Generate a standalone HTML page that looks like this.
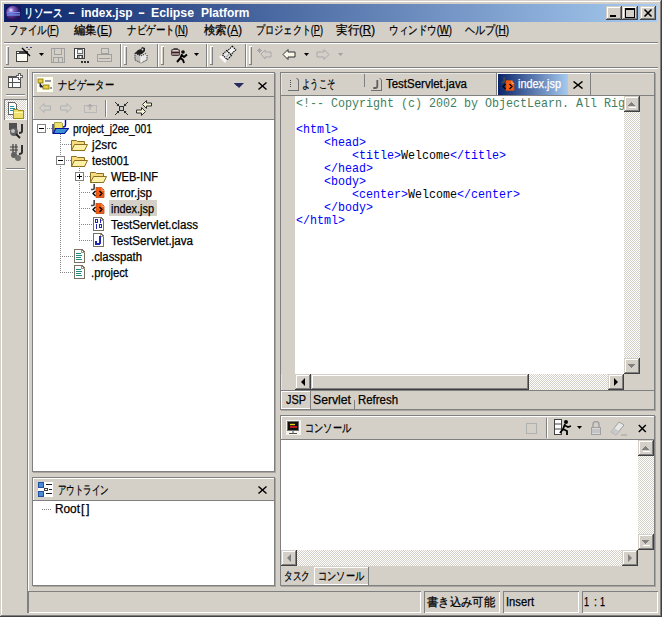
<!DOCTYPE html><html><head><meta charset="utf-8"><style>
*{margin:0;padding:0;box-sizing:border-box}
html,body{width:662px;height:617px;overflow:hidden;background:#D4D0C8}
body{position:relative;font-family:'Liberation Sans',sans-serif}
div{position:absolute}
.t{white-space:pre;transform-origin:0 0}
.t span{display:inline}
u{text-decoration:underline;text-decoration-thickness:1px;text-underline-offset:1px}
.dith{background:repeating-conic-gradient(#FFFFFF 0 25%,#D4D0C8 0 50%) 0 0/2px 2px}
</style></head><body><div style="left:0px;top:0px;width:662px;height:617px;background:#D4D0C8;"></div><div style="left:1px;top:1px;width:660px;height:1px;background:#FFFFFF;"></div><div style="left:1px;top:1px;width:1px;height:615px;background:#FFFFFF;"></div><div style="left:660px;top:1px;width:1px;height:615px;background:#808080;"></div><div style="left:1px;top:615px;width:660px;height:1px;background:#808080;"></div><div style="left:661px;top:0px;width:1px;height:617px;background:#404040;"></div><div style="left:0px;top:616px;width:662px;height:1px;background:#404040;"></div><div style="left:4px;top:4px;width:653px;height:18px;background:linear-gradient(to right,#0A246A,#A6CAF0);"></div><svg style="position:absolute;left:5px;top:5px;shape-rendering:auto" width="16" height="16" viewBox="0 0 16 16" shape-rendering="crispEdges"><defs><radialGradient id="eg" cx="0.35" cy="0.3" r="0.8"><stop offset="0" stop-color="#F0E8FF"/><stop offset="0.25" stop-color="#8060C0"/><stop offset="0.7" stop-color="#3A1E70"/><stop offset="1" stop-color="#1A0E40"/></radialGradient></defs><rect x="0" y="0" width="16" height="16" fill="#1A1860"/><circle cx="8" cy="8" r="7" fill="url(#eg)"/><rect x="2" y="7" width="13" height="1.3" fill="#7090F0"/><rect x="2" y="9.3" width="13" height="1.3" fill="#7090F0"/></svg><div class="t" id="t0" style="left:23.5px;top:6.84px;font-size:12px;line-height:12px;color:#fff;font-weight:700;font-family:'Liberation Sans',sans-serif;transform:scaleX(0.8021);"><span>リソース</span></div><div class="t" id="t1" style="left:67.5px;top:6.84px;font-size:12px;line-height:12px;color:#fff;font-weight:700;font-family:'Liberation Sans',sans-serif;transform:scaleX(1.7500);"><span>-</span></div><div class="t" id="t2" style="left:80.5px;top:6.84px;font-size:12px;line-height:12px;color:#fff;font-weight:700;font-family:'Liberation Sans',sans-serif;transform:scaleX(0.9901);"><span>index.jsp</span></div><div class="t" id="t3" style="left:138px;top:6.84px;font-size:12px;line-height:12px;color:#fff;font-weight:700;font-family:'Liberation Sans',sans-serif;transform:scaleX(1.7500);"><span>-</span></div><div class="t" id="t4" style="left:150.5px;top:6.84px;font-size:12px;line-height:12px;color:#fff;font-weight:700;font-family:'Liberation Sans',sans-serif;transform:scaleX(1.0230);"><span>Eclipse</span></div><div class="t" id="t5" style="left:200.5px;top:6.84px;font-size:12px;line-height:12px;color:#fff;font-weight:700;font-family:'Liberation Sans',sans-serif;transform:scaleX(0.9961);"><span>Platform</span></div><div style="left:606px;top:6px;width:16px;height:14px;background:#D4D0C8;box-shadow:inset -1px -1px #404040,inset 1px 1px #D4D0C8,inset -2px -2px #808080,inset 2px 2px #FFFFFF;"></div><div style="left:622px;top:6px;width:16px;height:14px;background:#D4D0C8;box-shadow:inset -1px -1px #404040,inset 1px 1px #D4D0C8,inset -2px -2px #808080,inset 2px 2px #FFFFFF;"></div><div style="left:640px;top:6px;width:16px;height:14px;background:#D4D0C8;box-shadow:inset -1px -1px #404040,inset 1px 1px #D4D0C8,inset -2px -2px #808080,inset 2px 2px #FFFFFF;"></div><svg style="position:absolute;left:606px;top:6px;" width="16" height="14" viewBox="0 0 16 14" shape-rendering="crispEdges"><rect x="4" y="9" width="6" height="2" fill="#000"/></svg><svg style="position:absolute;left:622px;top:6px;" width="16" height="14" viewBox="0 0 16 14" shape-rendering="crispEdges"><rect x="3" y="2" width="9" height="9" fill="none" stroke="#000" stroke-width="1"/><rect x="3" y="2" width="9" height="2" fill="#000"/></svg><svg style="position:absolute;left:640px;top:6px;shape-rendering:auto" width="16" height="14" viewBox="0 0 16 14" shape-rendering="crispEdges"><path d="M4.5 3.5 L11.5 10.5 M11.5 3.5 L4.5 10.5" stroke="#000" stroke-width="1.6" fill="none"/></svg><div class="t" id="t6" style="left:9px;top:24.34px;font-size:12px;line-height:12px;color:#000;font-weight:400;font-family:'Liberation Sans',sans-serif;-webkit-text-stroke:0.25px #000;transform:scaleX(0.7893);"><span>ファイル(<u>F</u>)</span></div><div class="t" id="t7" style="left:74px;top:24.34px;font-size:12px;line-height:12px;color:#000;font-weight:400;font-family:'Liberation Sans',sans-serif;-webkit-text-stroke:0.25px #000;transform:scaleX(0.9496);"><span>編集(<u>E</u>)</span></div><div class="t" id="t8" style="left:127px;top:24.34px;font-size:12px;line-height:12px;color:#000;font-weight:400;font-family:'Liberation Sans',sans-serif;-webkit-text-stroke:0.25px #000;transform:scaleX(0.7956);"><span>ナビゲート(<u>N</u>)</span></div><div class="t" id="t9" style="left:204px;top:24.34px;font-size:12px;line-height:12px;color:#000;font-weight:400;font-family:'Liberation Sans',sans-serif;-webkit-text-stroke:0.25px #000;transform:scaleX(0.9496);"><span>検索(<u>A</u>)</span></div><div class="t" id="t10" style="left:256px;top:24.34px;font-size:12px;line-height:12px;color:#000;font-weight:400;font-family:'Liberation Sans',sans-serif;-webkit-text-stroke:0.25px #000;transform:scaleX(0.7612);"><span>プロジェクト(<u>P</u>)</span></div><div class="t" id="t11" style="left:336px;top:24.34px;font-size:12px;line-height:12px;color:#000;font-weight:400;font-family:'Liberation Sans',sans-serif;-webkit-text-stroke:0.25px #000;transform:scaleX(0.9589);"><span>実行(<u>R</u>)</span></div><div class="t" id="t12" style="left:389px;top:24.34px;font-size:12px;line-height:12px;color:#000;font-weight:400;font-family:'Liberation Sans',sans-serif;-webkit-text-stroke:0.25px #000;transform:scaleX(0.7942);"><span>ウィンドウ(<u>W</u>)</span></div><div class="t" id="t13" style="left:465px;top:24.34px;font-size:12px;line-height:12px;color:#000;font-weight:400;font-family:'Liberation Sans',sans-serif;-webkit-text-stroke:0.25px #000;transform:scaleX(0.8354);"><span>ヘルプ(<u>H</u>)</span></div><div style="left:4px;top:42px;width:654px;height:1px;background:#808080;"></div><div style="left:4px;top:43px;width:654px;height:1px;background:#FFFFFF;"></div><div style="left:4px;top:67px;width:654px;height:1px;background:#808080;"></div><div style="left:4px;top:68px;width:654px;height:1px;background:#FFFFFF;"></div><div style="left:120px;top:44px;width:1px;height:23px;background:#808080;"></div><div style="left:121px;top:44px;width:1px;height:23px;background:#FFFFFF;"></div><div style="left:157px;top:44px;width:1px;height:23px;background:#808080;"></div><div style="left:158px;top:44px;width:1px;height:23px;background:#FFFFFF;"></div><div style="left:206px;top:44px;width:1px;height:23px;background:#808080;"></div><div style="left:207px;top:44px;width:1px;height:23px;background:#FFFFFF;"></div><div style="left:245px;top:44px;width:1px;height:23px;background:#808080;"></div><div style="left:246px;top:44px;width:1px;height:23px;background:#FFFFFF;"></div><div style="left:6px;top:46px;width:1px;height:19px;background:#FFFFFF;"></div><div style="left:8px;top:46px;width:1px;height:19px;background:#808080;"></div><div style="left:6px;top:46px;width:3px;height:1px;background:#FFFFFF;"></div><div style="left:6px;top:64px;width:3px;height:1px;background:#808080;"></div><div style="left:8px;top:46px;width:1px;height:1px;background:#FFFFFF;"></div><div style="left:124px;top:46px;width:1px;height:19px;background:#FFFFFF;"></div><div style="left:126px;top:46px;width:1px;height:19px;background:#808080;"></div><div style="left:124px;top:46px;width:3px;height:1px;background:#FFFFFF;"></div><div style="left:124px;top:64px;width:3px;height:1px;background:#808080;"></div><div style="left:126px;top:46px;width:1px;height:1px;background:#FFFFFF;"></div><div style="left:161px;top:46px;width:1px;height:19px;background:#FFFFFF;"></div><div style="left:163px;top:46px;width:1px;height:19px;background:#808080;"></div><div style="left:161px;top:46px;width:3px;height:1px;background:#FFFFFF;"></div><div style="left:161px;top:64px;width:3px;height:1px;background:#808080;"></div><div style="left:163px;top:46px;width:1px;height:1px;background:#FFFFFF;"></div><div style="left:210px;top:46px;width:1px;height:19px;background:#FFFFFF;"></div><div style="left:212px;top:46px;width:1px;height:19px;background:#808080;"></div><div style="left:210px;top:46px;width:3px;height:1px;background:#FFFFFF;"></div><div style="left:210px;top:64px;width:3px;height:1px;background:#808080;"></div><div style="left:212px;top:46px;width:1px;height:1px;background:#FFFFFF;"></div><div style="left:249px;top:46px;width:1px;height:19px;background:#FFFFFF;"></div><div style="left:251px;top:46px;width:1px;height:19px;background:#808080;"></div><div style="left:249px;top:46px;width:3px;height:1px;background:#FFFFFF;"></div><div style="left:249px;top:64px;width:3px;height:1px;background:#808080;"></div><div style="left:251px;top:46px;width:1px;height:1px;background:#FFFFFF;"></div><svg style="position:absolute;left:15px;top:46px;" width="18" height="17" viewBox="0 0 18 17" shape-rendering="crispEdges"><rect x="1" y="5" width="12" height="11" fill="#404040"/><rect x="2" y="8" width="10" height="7" fill="#FAFAF0"/><rect x="2" y="6" width="2" height="1" fill="#fff"/><path d="M7 2 L15 10" stroke="#000" stroke-width="1.5" shape-rendering="auto"/><rect x="11" y="1" width="2" height="1" fill="#404080"/><rect x="15" y="1" width="2" height="1" fill="#404080"/><rect x="13" y="3" width="2" height="1" fill="#808040"/></svg><svg style="position:absolute;left:39px;top:53px;shape-rendering:auto" width="5" height="3" viewBox="0 0 5 3" shape-rendering="crispEdges"><path d="M0 0H5L2.5 3Z" fill="#000"/></svg><svg style="position:absolute;left:51px;top:48px;" width="14" height="15" viewBox="0 0 14 15" shape-rendering="crispEdges"><rect x="0.5" y="0.5" width="13" height="14" fill="none" stroke="#A0A0A0"/><rect x="3.5" y="0.5" width="7" height="6" fill="none" stroke="#A0A0A0"/><rect x="2.5" y="9.5" width="9" height="5" fill="none" stroke="#A0A0A0"/><path d="M7 10v4" stroke="#A0A0A0"/></svg><svg style="position:absolute;left:74px;top:48px;" width="16" height="16" viewBox="0 0 16 16" shape-rendering="crispEdges"><rect x="0.5" y="0.5" width="10" height="10" fill="#D8D8D8" stroke="#404040"/><rect x="1" y="1" width="2" height="9" fill="#fff"/><rect x="3.5" y="1" width="5" height="4" fill="#F4F4F4" stroke="#707070"/><rect x="3.5" y="7" width="5" height="3.5" fill="#A0A0A0" stroke="#404040"/><rect x="6" y="8" width="1" height="2" fill="#fff"/><rect x="9" y="1" width="1" height="1" fill="#fff"/><rect x="7" y="13" width="2" height="2" fill="#303030"/><rect x="10" y="13" width="2" height="2" fill="#303030"/><rect x="13" y="13" width="2" height="2" fill="#303030"/></svg><svg style="position:absolute;left:97px;top:48px;" width="16" height="15" viewBox="0 0 16 15" shape-rendering="crispEdges"><rect x="4.5" y="0.5" width="7" height="5" fill="none" stroke="#A0A0A0"/><rect x="0.5" y="6.5" width="14" height="7" fill="none" stroke="#A0A0A0"/><path d="M2 10h11" stroke="#A0A0A0"/></svg><svg style="position:absolute;left:133px;top:46px;shape-rendering:auto" width="17" height="18" viewBox="0 0 17 18" shape-rendering="crispEdges"><path d="M2 7 L8 10 L8 17 L2 14Z" fill="#C0C0C0"/><path d="M8 10 L14 7 L14 14 L8 17Z" fill="#E8E8E8"/><path d="M2 7 L8 10 L14 7" fill="none" stroke="#202020" stroke-dasharray="1.2 1"/><path d="M2 7 L2 14 L8 17 L14 14 L14 8" fill="none" stroke="#202020" stroke-dasharray="1.2 1"/><path d="M2 7 L5 4 L8 3 L9 1 L12 2 L12 5 L9 8 L6 9Z" fill="#202020"/><circle cx="9.5" cy="3.5" r="1" fill="#E0E0E0"/><path d="M8 10v7" stroke="#F8F8F8"/></svg><svg style="position:absolute;left:170px;top:46px;shape-rendering:auto" width="20" height="18" viewBox="0 0 20 18" shape-rendering="crispEdges"><path d="M3.5 2.5h4v1.5" fill="none" stroke="#505050"/><rect x="1.5" y="3.5" width="8" height="6" rx="1" fill="#9A8080" stroke="#404040"/><path d="M2 6.5h7" stroke="#302020"/><path d="M3 4.5h5" stroke="#E0D0D0"/><circle cx="13" cy="6" r="1.8" fill="#000"/><path d="M12 8 L10.5 12 L7 16 M10.5 12 L13 14 L14 17 M11.5 9 L14 11 L17 8.5" stroke="#000" stroke-width="1.9" fill="none" stroke-linejoin="round"/></svg><svg style="position:absolute;left:194px;top:53px;shape-rendering:auto" width="5" height="3" viewBox="0 0 5 3" shape-rendering="crispEdges"><path d="M0 0H5L2.5 3Z" fill="#000"/></svg><svg style="position:absolute;left:218px;top:44px;shape-rendering:auto" width="20" height="20" viewBox="0 0 20 20" shape-rendering="crispEdges"><g transform="rotate(45 10 10)"><path d="M6.5 15h7l1 3.5h-9z" fill="#FFFFFF" opacity=".8"/><rect x="7.5" y="1.5" width="5" height="7" fill="#F4F4F4" stroke="#000" stroke-dasharray="1.5 .8"/><rect x="6.5" y="8.5" width="7" height="6" fill="#E4E4E4" stroke="#000" stroke-dasharray="1.5 .8"/><path d="M11 9.5v4" stroke="#A0A0A0"/></g></svg><svg style="position:absolute;left:257px;top:48px;shape-rendering:auto" width="17" height="13" viewBox="0 0 17 13" shape-rendering="crispEdges"><path d="M1 1l3 3M4 1l-3 3M2.5 0v5M0 2.5h5" stroke="#A8A8A8"/><path d="M4 6 L8 2 L8 4 L14 4 L14 9 L8 9 L8 11Z" fill="none" stroke="#A8A8A8"/></svg><svg style="position:absolute;left:282px;top:49px;shape-rendering:auto" width="14" height="11" viewBox="0 0 14 11" shape-rendering="crispEdges"><path d="M1 5.5 L6 0.5 L6 3 L13 3 L13 8 L6 8 L6 10.5Z" fill="#F8F8E8" stroke="#303030"/></svg><svg style="position:absolute;left:304px;top:53px;shape-rendering:auto" width="5" height="3" viewBox="0 0 5 3" shape-rendering="crispEdges"><path d="M0 0H5L2.5 3Z" fill="#000"/></svg><svg style="position:absolute;left:316px;top:49px;shape-rendering:auto" width="14" height="11" viewBox="0 0 14 11" shape-rendering="crispEdges"><path d="M13 5.5 L8 0.5 L8 3 L1 3 L1 8 L8 8 L8 10.5Z" fill="none" stroke="#A8A8A8"/></svg><svg style="position:absolute;left:338px;top:53px;shape-rendering:auto" width="5" height="3" viewBox="0 0 5 3" shape-rendering="crispEdges"><path d="M0 0H5L2.5 3Z" fill="#A0A0A0"/></svg><div style="left:27px;top:69px;width:1px;height:544px;background:#808080;"></div><div style="left:28px;top:69px;width:1px;height:544px;background:#FFFFFF;"></div><svg style="position:absolute;left:7px;top:73px;" width="18" height="16" viewBox="0 0 18 16" shape-rendering="crispEdges"><rect x="1.5" y="3.5" width="12" height="11" fill="#F8F8F8" stroke="#505050"/><rect x="1" y="3" width="9" height="2" fill="#505050"/><path d="M1 9.5h12M5.5 4v10" stroke="#505050"/><path d="M11.5 0.5h2v2h2v2h-2v2h-2v-2h-2v-2h2z" fill="#fff" stroke="#606060" transform="translate(0,0)"/></svg><div style="left:6px;top:94px;width:19px;height:1px;background:#808080;"></div><div style="left:6px;top:95px;width:19px;height:1px;background:#FFFFFF;"></div><div style="left:4px;top:99px;width:23px;height:21px;background:#D4D0C8;box-shadow:inset 1px 1px #808080,inset -1px -1px #FFFFFF"></div><div style="left:5px;top:100px;width:21px;height:19px;background:;background:repeating-conic-gradient(#FFFFFF 0 25%,#D4D0C8 0 50%) 0 0/2px 2px"></div><svg style="position:absolute;left:8px;top:102px;" width="17" height="17" viewBox="0 0 17 17" shape-rendering="crispEdges"><path d="M0.5 0.5h6l2 2v10h-8z" fill="#fff" stroke="#606060"/><path d="M2 4h4M2 6h5M2 8h4" stroke="#2090A0"/><path d="M5.5 7.5h4l1 1h5v8h-10z" fill="#F0E070" stroke="#A09010"/><path d="M6 10h9" stroke="#FFF8B0"/></svg><svg style="position:absolute;left:8px;top:123px;shape-rendering:auto" width="17" height="18" viewBox="0 0 17 18" shape-rendering="crispEdges"><rect x="1" y="0" width="8" height="7" fill="#505050"/><circle cx="6" cy="9" r="4" fill="#606060"/><circle cx="5" cy="8" r="2" fill="#fff" opacity=".6"/><path d="M8 11 L12 15" stroke="#202020" stroke-width="2"/><path d="M14 1v7q0 2-3 2" stroke="#303030" stroke-width="2" fill="none"/></svg><svg style="position:absolute;left:8px;top:144px;shape-rendering:auto" width="17" height="18" viewBox="0 0 17 18" shape-rendering="crispEdges"><path d="M2 3h8M2 6h8M5 0v9M8 0v9" stroke="#404040" stroke-width="1.2"/><circle cx="6" cy="11" r="3" fill="#606060"/><circle cx="10" cy="14" r="3" fill="#707070"/><path d="M14 1v7q0 2-3 2" stroke="#303030" stroke-width="2" fill="none"/></svg><div style="left:6px;top:168px;width:19px;height:1px;background:#808080;"></div><div style="left:6px;top:169px;width:19px;height:1px;background:#FFFFFF;"></div><div style="left:28px;top:591px;width:393px;height:22px;background:#D4D0C8;box-shadow:inset 1px 1px #808080,inset -1px -1px #FFFFFF;"></div><div style="left:424px;top:591px;width:76px;height:22px;background:#D4D0C8;box-shadow:inset 1px 1px #808080,inset -1px -1px #FFFFFF;"></div><div style="left:503px;top:591px;width:76px;height:22px;background:#D4D0C8;box-shadow:inset 1px 1px #808080,inset -1px -1px #FFFFFF;"></div><div style="left:582px;top:591px;width:76px;height:22px;background:#D4D0C8;box-shadow:inset 1px 1px #808080,inset -1px -1px #FFFFFF;"></div><div class="t" id="t14" style="left:427px;top:595.84px;font-size:12px;line-height:12px;color:#000;font-weight:400;font-family:'Liberation Sans',sans-serif;-webkit-text-stroke:0.25px #000;transform:scaleX(0.9444);"><span>書き込み可能</span></div><div class="t" id="t15" style="left:506px;top:595.84px;font-size:12px;line-height:12px;color:#000;font-weight:400;font-family:'Liberation Sans',sans-serif;-webkit-text-stroke:0.25px #000;transform:scaleX(0.9328);"><span>Insert</span></div><div class="t" id="t16" style="left:584px;top:595.84px;font-size:12px;line-height:12px;color:#000;font-weight:400;font-family:'Liberation Sans',sans-serif;-webkit-text-stroke:0.25px #000;transform:scaleX(0.7477);"><span>1</span></div><div class="t" id="t17" style="left:594px;top:595.84px;font-size:12px;line-height:12px;color:#000;font-weight:400;font-family:'Liberation Sans',sans-serif;-webkit-text-stroke:0.25px #000;transform:scaleX(0.8972);"><span>:</span></div><div class="t" id="t18" style="left:600px;top:595.84px;font-size:12px;line-height:12px;color:#000;font-weight:400;font-family:'Liberation Sans',sans-serif;-webkit-text-stroke:0.25px #000;transform:scaleX(0.7477);"><span>1</span></div><div style="left:32px;top:72px;width:243px;height:400px;background:#D4D0C8;"></div><div style="left:32px;top:72px;width:243px;height:1px;background:#808080;"></div><div style="left:32px;top:471px;width:243px;height:1px;background:#808080;"></div><div style="left:32px;top:72px;width:1px;height:400px;background:#808080;"></div><div style="left:274px;top:72px;width:1px;height:400px;background:#808080;"></div><div style="left:33px;top:73px;width:241px;height:1px;background:#FFFFFF;"></div><div style="left:33px;top:73px;width:1px;height:398px;background:#FFFFFF;"></div><div style="left:275px;top:73px;width:1px;height:400px;background:#A8A6A0;"></div><div style="left:33px;top:472px;width:243px;height:1px;background:#A8A6A0;"></div><div style="left:33px;top:96px;width:241px;height:1px;background:#808080;"></div><div style="left:33px;top:119px;width:241px;height:1px;background:#808080;"></div><div style="left:33px;top:120px;width:241px;height:351px;background:#fff;"></div><svg style="position:absolute;left:37px;top:77px;shape-rendering:auto" width="17" height="16" viewBox="0 0 17 16" shape-rendering="crispEdges"><rect x="0" y="0" width="16" height="15" fill="#FFFFF0"/><rect x="1" y="2" width="5" height="4" fill="#E8D040" stroke="#807000" stroke-width=".8"/><rect x="6" y="8" width="6" height="4" fill="#E8D040" stroke="#807000" stroke-width=".8"/><path d="M3 6v4h3M8 4h6M13 11h2" stroke="#303050"/></svg><div class="t" id="t19" style="left:58px;top:78.84px;font-size:12px;line-height:12px;color:#000;font-weight:400;font-family:'Liberation Sans',sans-serif;-webkit-text-stroke:0.25px #000;transform:scaleX(0.7778);"><span>ナビゲーター</span></div><svg style="position:absolute;left:234px;top:83px;shape-rendering:auto" width="5" height="3" viewBox="0 0 5 3" shape-rendering="crispEdges"><path d="M0 0H5L2.5 3Z" fill="#303070"/></svg><svg style="position:absolute;left:234px;top:83px;shape-rendering:auto" width="10" height="5" viewBox="0 0 10 5" shape-rendering="crispEdges"><path d="M0 0H10L5 5Z" fill="#2A2A60"/></svg><svg style="position:absolute;left:258px;top:82px;shape-rendering:auto" width="9" height="8" viewBox="0 0 9 8" shape-rendering="crispEdges"><path d="M0.5 0.5L8.5 7.5M8.5 0.5L0.5 7.5" stroke="#000" stroke-width="1.4"/></svg><svg style="position:absolute;left:39px;top:103px;shape-rendering:auto" width="12" height="10" viewBox="0 0 12 10" shape-rendering="crispEdges"><path d="M0.5 5 L5 0.5 L5 3 L11.5 3 L11.5 7 L5 7 L5 9.5Z" fill="none" stroke="#B0B0B0"/></svg><svg style="position:absolute;left:60px;top:103px;shape-rendering:auto" width="12" height="10" viewBox="0 0 12 10" shape-rendering="crispEdges"><path d="M11.5 5 L7 0.5 L7 3 L0.5 3 L0.5 7 L7 7 L7 9.5Z" fill="none" stroke="#B0B0B0"/></svg><svg style="position:absolute;left:84px;top:103px;shape-rendering:auto" width="13" height="10" viewBox="0 0 13 10" shape-rendering="crispEdges"><rect x="0.5" y="2.5" width="12" height="7" fill="none" stroke="#B8B8B8"/><path d="M6 1v6M3.5 4L6 1.5L8.5 4" stroke="#A0A0A0" fill="none"/></svg><div style="left:105px;top:100px;width:1px;height:17px;background:#808080;"></div><div style="left:106px;top:100px;width:1px;height:17px;background:#FFFFFF;"></div><svg style="position:absolute;left:114px;top:101px;shape-rendering:auto" width="15" height="15" viewBox="0 0 15 15" shape-rendering="crispEdges"><rect x="5.5" y="5.5" width="4" height="4" fill="#C8C8C8" stroke="#303030"/><path d="M1 1L4.5 4.5M14 1L10.5 4.5M1 14L4.5 10.5M14 14L10.5 10.5" stroke="#303030"/><path d="M5 5H2.5L5 2.5ZM10 5H12.5L10 2.5ZM5 10H2.5L5 12.5ZM10 10H12.5L10 12.5Z" fill="#202020"/></svg><svg style="position:absolute;left:135px;top:99px;shape-rendering:auto" width="18" height="18" viewBox="0 0 18 18" shape-rendering="crispEdges"><path d="M7.5 5.5 L11.5 1.5 L11.5 4 L16.5 4 L16.5 7 L11.5 7 L11.5 9.5Z" fill="#F4F4D8" stroke="#303030"/><path d="M10.5 12.5 L6.5 8.5 L6.5 11 L1.5 11 L1.5 14 L6.5 14 L6.5 16.5Z" fill="#F4F4D8" stroke="#303030"/></svg><svg style="position:absolute;left:37px;top:124px;shape-rendering:auto" width="9" height="9" viewBox="0 0 9 9" shape-rendering="crispEdges"><rect x="0.5" y="0.5" width="8" height="8" fill="#fff" stroke="#808080"/><path d="M2 4.5h5" stroke="#000"/></svg><div style="left:47px;top:128px;width:1px;height:1px;background:#848484;"></div><div style="left:49px;top:128px;width:1px;height:1px;background:#848484;"></div><div style="left:51px;top:128px;width:1px;height:1px;background:#848484;"></div><svg style="position:absolute;left:52px;top:119px;shape-rendering:auto" width="17" height="16" viewBox="0 0 17 16" shape-rendering="crispEdges"><path d="M2.5 3.5h7l1 1v6h-8z" fill="#F0E070" stroke="#909020" stroke-width=".8"/><path d="M1 5 L1 14 L3 14" stroke="#202060" stroke-width="1.4" fill="none"/><path d="M3.5 9.5h13l-4 5h-11z" fill="#3A90D0" stroke="#0010A0" stroke-width="1.2"/><path d="M13.5 1v5q0 2-2.5 2" stroke="#0000E0" stroke-width="1.4" fill="none"/></svg><div class="t" id="t20" style="left:73px;top:122.54px;font-size:12px;line-height:12px;color:#000;font-weight:400;font-family:'Liberation Sans',sans-serif;-webkit-text-stroke:0.25px #000;transform:scaleX(0.8580);"><span>project_j2ee_001</span></div><div style="left:60px;top:134px;width:1px;height:1px;background:#848484;"></div><div style="left:60px;top:136px;width:1px;height:1px;background:#848484;"></div><div style="left:60px;top:138px;width:1px;height:1px;background:#848484;"></div><div style="left:60px;top:140px;width:1px;height:1px;background:#848484;"></div><div style="left:60px;top:142px;width:1px;height:1px;background:#848484;"></div><div style="left:60px;top:144px;width:1px;height:1px;background:#848484;"></div><div style="left:60px;top:146px;width:1px;height:1px;background:#848484;"></div><div style="left:60px;top:148px;width:1px;height:1px;background:#848484;"></div><div style="left:60px;top:150px;width:1px;height:1px;background:#848484;"></div><div style="left:60px;top:152px;width:1px;height:1px;background:#848484;"></div><div style="left:60px;top:154px;width:1px;height:1px;background:#848484;"></div><div style="left:60px;top:156px;width:1px;height:1px;background:#848484;"></div><div style="left:60px;top:158px;width:1px;height:1px;background:#848484;"></div><div style="left:60px;top:160px;width:1px;height:1px;background:#848484;"></div><div style="left:60px;top:162px;width:1px;height:1px;background:#848484;"></div><div style="left:60px;top:164px;width:1px;height:1px;background:#848484;"></div><div style="left:60px;top:166px;width:1px;height:1px;background:#848484;"></div><div style="left:60px;top:168px;width:1px;height:1px;background:#848484;"></div><div style="left:60px;top:170px;width:1px;height:1px;background:#848484;"></div><div style="left:60px;top:172px;width:1px;height:1px;background:#848484;"></div><div style="left:60px;top:174px;width:1px;height:1px;background:#848484;"></div><div style="left:60px;top:176px;width:1px;height:1px;background:#848484;"></div><div style="left:60px;top:178px;width:1px;height:1px;background:#848484;"></div><div style="left:60px;top:180px;width:1px;height:1px;background:#848484;"></div><div style="left:60px;top:182px;width:1px;height:1px;background:#848484;"></div><div style="left:60px;top:184px;width:1px;height:1px;background:#848484;"></div><div style="left:60px;top:186px;width:1px;height:1px;background:#848484;"></div><div style="left:60px;top:188px;width:1px;height:1px;background:#848484;"></div><div style="left:60px;top:190px;width:1px;height:1px;background:#848484;"></div><div style="left:60px;top:192px;width:1px;height:1px;background:#848484;"></div><div style="left:60px;top:194px;width:1px;height:1px;background:#848484;"></div><div style="left:60px;top:196px;width:1px;height:1px;background:#848484;"></div><div style="left:60px;top:198px;width:1px;height:1px;background:#848484;"></div><div style="left:60px;top:200px;width:1px;height:1px;background:#848484;"></div><div style="left:60px;top:202px;width:1px;height:1px;background:#848484;"></div><div style="left:60px;top:204px;width:1px;height:1px;background:#848484;"></div><div style="left:60px;top:206px;width:1px;height:1px;background:#848484;"></div><div style="left:60px;top:208px;width:1px;height:1px;background:#848484;"></div><div style="left:60px;top:210px;width:1px;height:1px;background:#848484;"></div><div style="left:60px;top:212px;width:1px;height:1px;background:#848484;"></div><div style="left:60px;top:214px;width:1px;height:1px;background:#848484;"></div><div style="left:60px;top:216px;width:1px;height:1px;background:#848484;"></div><div style="left:60px;top:218px;width:1px;height:1px;background:#848484;"></div><div style="left:60px;top:220px;width:1px;height:1px;background:#848484;"></div><div style="left:60px;top:222px;width:1px;height:1px;background:#848484;"></div><div style="left:60px;top:224px;width:1px;height:1px;background:#848484;"></div><div style="left:60px;top:226px;width:1px;height:1px;background:#848484;"></div><div style="left:60px;top:228px;width:1px;height:1px;background:#848484;"></div><div style="left:60px;top:230px;width:1px;height:1px;background:#848484;"></div><div style="left:60px;top:232px;width:1px;height:1px;background:#848484;"></div><div style="left:60px;top:234px;width:1px;height:1px;background:#848484;"></div><div style="left:60px;top:236px;width:1px;height:1px;background:#848484;"></div><div style="left:60px;top:238px;width:1px;height:1px;background:#848484;"></div><div style="left:60px;top:240px;width:1px;height:1px;background:#848484;"></div><div style="left:60px;top:242px;width:1px;height:1px;background:#848484;"></div><div style="left:60px;top:244px;width:1px;height:1px;background:#848484;"></div><div style="left:60px;top:246px;width:1px;height:1px;background:#848484;"></div><div style="left:60px;top:248px;width:1px;height:1px;background:#848484;"></div><div style="left:60px;top:250px;width:1px;height:1px;background:#848484;"></div><div style="left:60px;top:252px;width:1px;height:1px;background:#848484;"></div><div style="left:60px;top:254px;width:1px;height:1px;background:#848484;"></div><div style="left:60px;top:256px;width:1px;height:1px;background:#848484;"></div><div style="left:60px;top:258px;width:1px;height:1px;background:#848484;"></div><div style="left:60px;top:260px;width:1px;height:1px;background:#848484;"></div><div style="left:60px;top:262px;width:1px;height:1px;background:#848484;"></div><div style="left:60px;top:264px;width:1px;height:1px;background:#848484;"></div><div style="left:60px;top:266px;width:1px;height:1px;background:#848484;"></div><div style="left:60px;top:268px;width:1px;height:1px;background:#848484;"></div><div style="left:60px;top:270px;width:1px;height:1px;background:#848484;"></div><div style="left:60px;top:272px;width:1px;height:1px;background:#848484;"></div><div style="left:62px;top:144px;width:1px;height:1px;background:#848484;"></div><div style="left:64px;top:144px;width:1px;height:1px;background:#848484;"></div><div style="left:66px;top:144px;width:1px;height:1px;background:#848484;"></div><div style="left:68px;top:144px;width:1px;height:1px;background:#848484;"></div><div style="left:70px;top:144px;width:1px;height:1px;background:#848484;"></div><svg style="position:absolute;left:71px;top:139px;shape-rendering:auto" width="17" height="12" viewBox="0 0 17 12" shape-rendering="crispEdges"><path d="M0.5 1.5h5l1 1h7v9h-13z" fill="#F5DC80" stroke="#8C7020"/><path d="M3.5 5.5h13l-3 6h-13z" fill="#FFF0A8" stroke="#8C7020"/></svg><div class="t" id="t21" style="left:92px;top:138.54px;font-size:12px;line-height:12px;color:#000;font-weight:400;font-family:'Liberation Sans',sans-serif;-webkit-text-stroke:0.25px #000;transform:scaleX(0.9864);"><span>j2src</span></div><svg style="position:absolute;left:56px;top:156px;shape-rendering:auto" width="9" height="9" viewBox="0 0 9 9" shape-rendering="crispEdges"><rect x="0.5" y="0.5" width="8" height="8" fill="#fff" stroke="#808080"/><path d="M2 4.5h5" stroke="#000"/></svg><div style="left:66px;top:160px;width:1px;height:1px;background:#848484;"></div><div style="left:68px;top:160px;width:1px;height:1px;background:#848484;"></div><div style="left:70px;top:160px;width:1px;height:1px;background:#848484;"></div><svg style="position:absolute;left:71px;top:155px;shape-rendering:auto" width="17" height="12" viewBox="0 0 17 12" shape-rendering="crispEdges"><path d="M0.5 1.5h5l1 1h7v9h-13z" fill="#F5DC80" stroke="#8C7020"/><path d="M3.5 5.5h13l-3 6h-13z" fill="#FFF0A8" stroke="#8C7020"/></svg><div class="t" id="t22" style="left:92px;top:154.54px;font-size:12px;line-height:12px;color:#000;font-weight:400;font-family:'Liberation Sans',sans-serif;-webkit-text-stroke:0.25px #000;transform:scaleX(0.9397);"><span>test001</span></div><div style="left:79px;top:166px;width:1px;height:1px;background:#848484;"></div><div style="left:79px;top:168px;width:1px;height:1px;background:#848484;"></div><div style="left:79px;top:170px;width:1px;height:1px;background:#848484;"></div><div style="left:79px;top:172px;width:1px;height:1px;background:#848484;"></div><div style="left:79px;top:174px;width:1px;height:1px;background:#848484;"></div><div style="left:79px;top:176px;width:1px;height:1px;background:#848484;"></div><div style="left:79px;top:178px;width:1px;height:1px;background:#848484;"></div><div style="left:79px;top:180px;width:1px;height:1px;background:#848484;"></div><div style="left:79px;top:182px;width:1px;height:1px;background:#848484;"></div><div style="left:79px;top:184px;width:1px;height:1px;background:#848484;"></div><div style="left:79px;top:186px;width:1px;height:1px;background:#848484;"></div><div style="left:79px;top:188px;width:1px;height:1px;background:#848484;"></div><div style="left:79px;top:190px;width:1px;height:1px;background:#848484;"></div><div style="left:79px;top:192px;width:1px;height:1px;background:#848484;"></div><div style="left:79px;top:194px;width:1px;height:1px;background:#848484;"></div><div style="left:79px;top:196px;width:1px;height:1px;background:#848484;"></div><div style="left:79px;top:198px;width:1px;height:1px;background:#848484;"></div><div style="left:79px;top:200px;width:1px;height:1px;background:#848484;"></div><div style="left:79px;top:202px;width:1px;height:1px;background:#848484;"></div><div style="left:79px;top:204px;width:1px;height:1px;background:#848484;"></div><div style="left:79px;top:206px;width:1px;height:1px;background:#848484;"></div><div style="left:79px;top:208px;width:1px;height:1px;background:#848484;"></div><div style="left:79px;top:210px;width:1px;height:1px;background:#848484;"></div><div style="left:79px;top:212px;width:1px;height:1px;background:#848484;"></div><div style="left:79px;top:214px;width:1px;height:1px;background:#848484;"></div><div style="left:79px;top:216px;width:1px;height:1px;background:#848484;"></div><div style="left:79px;top:218px;width:1px;height:1px;background:#848484;"></div><div style="left:79px;top:220px;width:1px;height:1px;background:#848484;"></div><div style="left:79px;top:222px;width:1px;height:1px;background:#848484;"></div><div style="left:79px;top:224px;width:1px;height:1px;background:#848484;"></div><div style="left:79px;top:226px;width:1px;height:1px;background:#848484;"></div><div style="left:79px;top:228px;width:1px;height:1px;background:#848484;"></div><div style="left:79px;top:230px;width:1px;height:1px;background:#848484;"></div><div style="left:79px;top:232px;width:1px;height:1px;background:#848484;"></div><div style="left:79px;top:234px;width:1px;height:1px;background:#848484;"></div><div style="left:79px;top:236px;width:1px;height:1px;background:#848484;"></div><div style="left:79px;top:238px;width:1px;height:1px;background:#848484;"></div><div style="left:79px;top:240px;width:1px;height:1px;background:#848484;"></div><svg style="position:absolute;left:75px;top:172px;shape-rendering:auto" width="9" height="9" viewBox="0 0 9 9" shape-rendering="crispEdges"><rect x="0.5" y="0.5" width="8" height="8" fill="#fff" stroke="#808080"/><path d="M2 4.5h5" stroke="#000"/><path d="M4.5 2v5" stroke="#000"/></svg><div style="left:85px;top:176px;width:1px;height:1px;background:#848484;"></div><div style="left:87px;top:176px;width:1px;height:1px;background:#848484;"></div><div style="left:89px;top:176px;width:1px;height:1px;background:#848484;"></div><svg style="position:absolute;left:90px;top:171px;shape-rendering:auto" width="17" height="12" viewBox="0 0 17 12" shape-rendering="crispEdges"><path d="M0.5 1.5h5l1 1h7v9h-13z" fill="#F5DC80" stroke="#8C7020"/><path d="M3.5 5.5h13l-3 6h-13z" fill="#FFF0A8" stroke="#8C7020"/></svg><div class="t" id="t23" style="left:111px;top:170.54px;font-size:12px;line-height:12px;color:#000;font-weight:400;font-family:'Liberation Sans',sans-serif;-webkit-text-stroke:0.25px #000;transform:scaleX(0.9275);"><span>WEB-INF</span></div><div style="left:81px;top:192px;width:1px;height:1px;background:#848484;"></div><div style="left:83px;top:192px;width:1px;height:1px;background:#848484;"></div><div style="left:85px;top:192px;width:1px;height:1px;background:#848484;"></div><div style="left:87px;top:192px;width:1px;height:1px;background:#848484;"></div><div style="left:89px;top:192px;width:1px;height:1px;background:#848484;"></div><svg style="position:absolute;left:90px;top:184px;shape-rendering:auto" width="16" height="16" viewBox="0 0 16 16" shape-rendering="crispEdges"><path d="M6 3.5h5.5l2.5 2.5v7.5h-8z" fill="#F25C12" stroke="#C04A10" stroke-width=".8"/><path d="M12 3.5v3h2" fill="none" stroke="#FFB080" stroke-width=".8"/><path d="M4.2 0v4.2q0 1.3-1.3 1.3h-1.9" stroke="#484848" stroke-width="1.7" fill="none"/><path d="M5.5 7L3 9.5l2.5 2.5M9.5 7L12 9.5l-2.5 2.5" stroke="#000" stroke-width="1.3" fill="none"/></svg><div class="t" id="t24" style="left:110px;top:186.54px;font-size:12px;line-height:12px;color:#000;font-weight:400;font-family:'Liberation Sans',sans-serif;-webkit-text-stroke:0.25px #000;transform:scaleX(0.9686);"><span>error.jsp</span></div><div style="left:109px;top:200px;width:48px;height:16px;background:#D4D0C8;"></div><div style="left:81px;top:208px;width:1px;height:1px;background:#848484;"></div><div style="left:83px;top:208px;width:1px;height:1px;background:#848484;"></div><div style="left:85px;top:208px;width:1px;height:1px;background:#848484;"></div><div style="left:87px;top:208px;width:1px;height:1px;background:#848484;"></div><div style="left:89px;top:208px;width:1px;height:1px;background:#848484;"></div><svg style="position:absolute;left:90px;top:200px;shape-rendering:auto" width="16" height="16" viewBox="0 0 16 16" shape-rendering="crispEdges"><path d="M6 3.5h5.5l2.5 2.5v7.5h-8z" fill="#F25C12" stroke="#C04A10" stroke-width=".8"/><path d="M12 3.5v3h2" fill="none" stroke="#FFB080" stroke-width=".8"/><path d="M4.2 0v4.2q0 1.3-1.3 1.3h-1.9" stroke="#484848" stroke-width="1.7" fill="none"/><path d="M5.5 7L3 9.5l2.5 2.5M9.5 7L12 9.5l-2.5 2.5" stroke="#000" stroke-width="1.3" fill="none"/></svg><div class="t" id="t25" style="left:111px;top:202.54px;font-size:12px;line-height:12px;color:#000;font-weight:400;font-family:'Liberation Sans',sans-serif;-webkit-text-stroke:0.25px #000;transform:scaleX(0.9077);"><span>index.jsp</span></div><div style="left:81px;top:224px;width:1px;height:1px;background:#848484;"></div><div style="left:83px;top:224px;width:1px;height:1px;background:#848484;"></div><div style="left:85px;top:224px;width:1px;height:1px;background:#848484;"></div><div style="left:87px;top:224px;width:1px;height:1px;background:#848484;"></div><div style="left:89px;top:224px;width:1px;height:1px;background:#848484;"></div><div style="left:91px;top:224px;width:1px;height:1px;background:#848484;"></div><svg style="position:absolute;left:93px;top:217px;" width="12" height="15" viewBox="0 0 12 15" shape-rendering="crispEdges"><path d="M0.5 0.5h7.5l2.5 2.5v10.5h-10z" fill="#fff" stroke="#787060"/><path d="M7.5 0.5v3h3" fill="none" stroke="#A09880"/><path d="M2.5 2.5h2v3h-2zM7.5 2v4M3.5 7v4.5M6.5 7.5h2v3h-2z" fill="none" stroke="#2028B0"/></svg><div class="t" id="t26" style="left:111px;top:218.54px;font-size:12px;line-height:12px;color:#000;font-weight:400;font-family:'Liberation Sans',sans-serif;-webkit-text-stroke:0.25px #000;transform:scaleX(0.9663);"><span>TestServlet.class</span></div><div style="left:81px;top:240px;width:1px;height:1px;background:#848484;"></div><div style="left:83px;top:240px;width:1px;height:1px;background:#848484;"></div><div style="left:85px;top:240px;width:1px;height:1px;background:#848484;"></div><div style="left:87px;top:240px;width:1px;height:1px;background:#848484;"></div><div style="left:89px;top:240px;width:1px;height:1px;background:#848484;"></div><div style="left:91px;top:240px;width:1px;height:1px;background:#848484;"></div><svg style="position:absolute;left:93px;top:233px;" width="12" height="15" viewBox="0 0 12 15" shape-rendering="crispEdges"><path d="M0.5 0.5h7.5l2.5 2.5v10.5h-10z" fill="#fff" stroke="#787060"/><path d="M7.5 0.5v3h3" fill="none" stroke="#A09880"/><rect x="6" y="3" width="2" height="8" fill="#2028B0"/><rect x="2" y="10" width="5" height="2" fill="#2028B0"/><rect x="2" y="8" width="2" height="2" fill="#2028B0"/></svg><div class="t" id="t27" style="left:111px;top:234.54px;font-size:12px;line-height:12px;color:#000;font-weight:400;font-family:'Liberation Sans',sans-serif;-webkit-text-stroke:0.25px #000;transform:scaleX(0.9681);"><span>TestServlet.java</span></div><div style="left:62px;top:256px;width:1px;height:1px;background:#848484;"></div><div style="left:64px;top:256px;width:1px;height:1px;background:#848484;"></div><div style="left:66px;top:256px;width:1px;height:1px;background:#848484;"></div><div style="left:68px;top:256px;width:1px;height:1px;background:#848484;"></div><div style="left:70px;top:256px;width:1px;height:1px;background:#848484;"></div><div style="left:72px;top:256px;width:1px;height:1px;background:#848484;"></div><svg style="position:absolute;left:74px;top:249px;" width="12" height="15" viewBox="0 0 12 15" shape-rendering="crispEdges"><path d="M0.5 0.5h7.5l2.5 2.5v10.5h-10z" fill="#fff" stroke="#787060"/><path d="M7.5 0.5v3h3" fill="none" stroke="#A09880"/><path d="M2 4.5h5M2 6.5h6M2 8.5h5M2 10.5h6" stroke="#208C80"/></svg><div class="t" id="t28" style="left:91px;top:250.54px;font-size:12px;line-height:12px;color:#000;font-weight:400;font-family:'Liberation Sans',sans-serif;-webkit-text-stroke:0.25px #000;transform:scaleX(0.9439);"><span>.classpath</span></div><div style="left:62px;top:272px;width:1px;height:1px;background:#848484;"></div><div style="left:64px;top:272px;width:1px;height:1px;background:#848484;"></div><div style="left:66px;top:272px;width:1px;height:1px;background:#848484;"></div><div style="left:68px;top:272px;width:1px;height:1px;background:#848484;"></div><div style="left:70px;top:272px;width:1px;height:1px;background:#848484;"></div><div style="left:72px;top:272px;width:1px;height:1px;background:#848484;"></div><svg style="position:absolute;left:74px;top:265px;" width="12" height="15" viewBox="0 0 12 15" shape-rendering="crispEdges"><path d="M0.5 0.5h7.5l2.5 2.5v10.5h-10z" fill="#fff" stroke="#787060"/><path d="M7.5 0.5v3h3" fill="none" stroke="#A09880"/><path d="M2 4.5h5M2 6.5h6M2 8.5h5M2 10.5h6" stroke="#208C80"/></svg><div class="t" id="t29" style="left:91px;top:266.54px;font-size:12px;line-height:12px;color:#000;font-weight:400;font-family:'Liberation Sans',sans-serif;-webkit-text-stroke:0.25px #000;transform:scaleX(0.9401);"><span>.project</span></div><div style="left:32px;top:477px;width:243px;height:109px;background:#D4D0C8;"></div><div style="left:32px;top:477px;width:243px;height:1px;background:#808080;"></div><div style="left:32px;top:585px;width:243px;height:1px;background:#808080;"></div><div style="left:32px;top:477px;width:1px;height:109px;background:#808080;"></div><div style="left:274px;top:477px;width:1px;height:109px;background:#808080;"></div><div style="left:33px;top:478px;width:241px;height:1px;background:#FFFFFF;"></div><div style="left:33px;top:478px;width:1px;height:107px;background:#FFFFFF;"></div><div style="left:275px;top:478px;width:1px;height:109px;background:#A8A6A0;"></div><div style="left:33px;top:586px;width:243px;height:1px;background:#A8A6A0;"></div><div style="left:33px;top:500px;width:241px;height:1px;background:#808080;"></div><div style="left:33px;top:501px;width:241px;height:84px;background:#fff;"></div><svg style="position:absolute;left:38px;top:482px;" width="15" height="15" viewBox="0 0 15 15" shape-rendering="crispEdges"><rect x="0" y="0" width="15" height="15" fill="#FFFFFF"/><rect x="0.5" y="0.5" width="5" height="5" fill="#4A88D8" stroke="#2050A0"/><rect x="0.5" y="9.5" width="5" height="5" fill="#4A88D8" stroke="#2050A0"/><rect x="6.5" y="6.5" width="3" height="2" fill="#fff" stroke="#404040"/><path d="M8 2.5h6M11 7.5h3M8 11.5h6" stroke="#202020"/></svg><div class="t" id="t30" style="left:58px;top:483.84px;font-size:12px;line-height:12px;color:#000;font-weight:400;font-family:'Liberation Sans',sans-serif;-webkit-text-stroke:0.25px #000;transform:scaleX(0.7083);"><span>アウトライン</span></div><svg style="position:absolute;left:258px;top:486px;shape-rendering:auto" width="9" height="8" viewBox="0 0 9 8" shape-rendering="crispEdges"><path d="M0.5 0.5L8.5 7.5M8.5 0.5L0.5 7.5" stroke="#000" stroke-width="1.4"/></svg><div style="left:42px;top:509px;width:1px;height:1px;background:#848484;"></div><div style="left:44px;top:509px;width:1px;height:1px;background:#848484;"></div><div style="left:46px;top:509px;width:1px;height:1px;background:#848484;"></div><div style="left:48px;top:509px;width:1px;height:1px;background:#848484;"></div><div style="left:50px;top:509px;width:1px;height:1px;background:#848484;"></div><div class="t" id="t31" style="left:55px;top:502.84px;font-size:12px;line-height:12px;color:#000;font-weight:400;font-family:'Liberation Sans',sans-serif;-webkit-text-stroke:0.25px #000;transform:scaleX(0.9858);"><span>Root</span></div><div class="t" id="t32" style="left:80.5px;top:502.84px;font-size:12px;line-height:12px;color:#000;font-weight:400;font-family:'Liberation Sans',sans-serif;-webkit-text-stroke:0.25px #000;transform:scaleX(1.0467);"><span>[</span></div><div class="t" id="t33" style="left:85.5px;top:502.84px;font-size:12px;line-height:12px;color:#000;font-weight:400;font-family:'Liberation Sans',sans-serif;-webkit-text-stroke:0.25px #000;transform:scaleX(1.0467);"><span>]</span></div><div style="left:280px;top:72px;width:375px;height:338px;background:#D4D0C8;"></div><div style="left:280px;top:72px;width:375px;height:1px;background:#808080;"></div><div style="left:280px;top:409px;width:375px;height:1px;background:#808080;"></div><div style="left:280px;top:72px;width:1px;height:338px;background:#808080;"></div><div style="left:654px;top:72px;width:1px;height:338px;background:#808080;"></div><div style="left:281px;top:73px;width:373px;height:1px;background:#E6E4DE;"></div><div style="left:281px;top:73px;width:1px;height:336px;background:#E6E4DE;"></div><div style="left:655px;top:73px;width:1px;height:338px;background:#A8A6A0;"></div><div style="left:281px;top:410px;width:375px;height:1px;background:#A8A6A0;"></div><div style="left:281px;top:95px;width:373px;height:1px;background:#808080;"></div><div style="left:364px;top:74px;width:1px;height:13px;background:#808080;"></div><svg style="position:absolute;left:288px;top:77px;" width="12" height="15" viewBox="0 0 12 15" shape-rendering="crispEdges"><path d="M10.5 3v10.5H0" fill="none" stroke="#707070"/><path d="M8 1.5h1l1.5 1.5" fill="none" stroke="#909090"/><rect x="2" y="3" width="1" height="1" fill="#505050"/><rect x="2" y="5" width="1" height="1" fill="#505050"/><rect x="2" y="7" width="1" height="1" fill="#505050"/><rect x="2" y="9" width="1" height="1" fill="#505050"/></svg><div class="t" id="t34" style="left:302px;top:78.14px;font-size:12px;line-height:12px;color:#000;font-weight:400;font-family:'Liberation Sans',sans-serif;-webkit-text-stroke:0.25px #000;transform:scaleX(0.6875);"><span>ようこそ</span></div><svg style="position:absolute;left:371px;top:77px;" width="12" height="15" viewBox="0 0 12 15" shape-rendering="crispEdges"><path d="M10.5 3v10.5H0" fill="none" stroke="#707070"/><path d="M8 1.5h1l1.5 1.5" fill="none" stroke="#A0A0A0"/><path d="M6.3 3v6q0 2-2 2h-2" stroke="#606060" stroke-width="1.8" fill="none" shape-rendering="auto"/></svg><div class="t" id="t35" style="left:386px;top:78.14px;font-size:12px;line-height:12px;color:#000;font-weight:400;font-family:'Liberation Sans',sans-serif;-webkit-text-stroke:0.25px #000;transform:scaleX(0.9563);"><span>TestServlet.java</span></div><div style="left:496px;top:73px;width:1px;height:22px;background:#808080;"></div><div style="left:497px;top:73px;width:93px;height:22px;background:#D4D0C8;"></div><div style="left:497px;top:73px;width:93px;height:1px;background:#FFFFFF;"></div><div style="left:497px;top:73px;width:1px;height:22px;background:#FFFFFF;"></div><div style="left:590px;top:73px;width:1px;height:22px;background:#808080;"></div><div style="left:498px;top:74px;width:70px;height:21px;background:linear-gradient(to right,#0A246A,#A6CAF0);"></div><svg style="position:absolute;left:500px;top:77px;shape-rendering:auto" width="16" height="16" viewBox="0 0 16 16" shape-rendering="crispEdges"><path d="M6 3.5h5.5l2.5 2.5v7.5h-8z" fill="#F25C12" stroke="#C04A10" stroke-width=".8"/><path d="M12 3.5v3h2" fill="none" stroke="#FFB080" stroke-width=".8"/><path d="M4.2 0v4.2q0 1.3-1.3 1.3h-1.9" stroke="#484848" stroke-width="1.7" fill="none"/><path d="M5.5 7L3 9.5l2.5 2.5M9.5 7L12 9.5l-2.5 2.5" stroke="#000" stroke-width="1.3" fill="none"/></svg><div class="t" id="t36" style="left:518px;top:78.14px;font-size:12px;line-height:12px;color:#fff;font-weight:400;font-family:'Liberation Sans',sans-serif;-webkit-text-stroke:0.25px #fff;transform:scaleX(0.9077);"><span>index.jsp</span></div><svg style="position:absolute;left:573px;top:81px;shape-rendering:auto" width="10" height="8" viewBox="0 0 10 8" shape-rendering="crispEdges"><path d="M0.5 0.5L9.5 7.5M9.5 0.5L0.5 7.5" stroke="#000" stroke-width="1.5"/></svg><div style="left:281px;top:96px;width:14px;height:278px;background:#D4D0C8;"></div><div style="left:295px;top:96px;width:329px;height:278px;background:#fff;"></div><div class="t" id="t37" style="left:295.5px;top:96.57px;font-size:13.5px;line-height:13.5px;color:#000;font-weight:400;font-family:'Liberation Mono',monospace;transform:scaleX(0.8640);"><span><span style="color:#3F7F5F">&lt;!-- Copyright (c) 2002 by ObjectLearn. All Rig</span></span></div><div class="t" id="t38" style="left:295.5px;top:122.57px;font-size:13.5px;line-height:13.5px;color:#000;font-weight:400;font-family:'Liberation Mono',monospace;transform:scaleX(0.8640);"><span><span style="color:#0000FF">&lt;html&gt;</span></span></div><div class="t" id="t39" style="left:295.5px;top:135.57px;font-size:13.5px;line-height:13.5px;color:#000;font-weight:400;font-family:'Liberation Mono',monospace;transform:scaleX(0.8640);"><span>    <span style="color:#0000FF">&lt;head&gt;</span></span></div><div class="t" id="t40" style="left:295.5px;top:148.57px;font-size:13.5px;line-height:13.5px;color:#000;font-weight:400;font-family:'Liberation Mono',monospace;transform:scaleX(0.8640);"><span>        <span style="color:#0000FF">&lt;title&gt;</span>Welcome<span style="color:#0000FF">&lt;/title&gt;</span></span></div><div class="t" id="t41" style="left:295.5px;top:161.57px;font-size:13.5px;line-height:13.5px;color:#000;font-weight:400;font-family:'Liberation Mono',monospace;transform:scaleX(0.8640);"><span>    <span style="color:#0000FF">&lt;/head&gt;</span></span></div><div class="t" id="t42" style="left:295.5px;top:174.57px;font-size:13.5px;line-height:13.5px;color:#000;font-weight:400;font-family:'Liberation Mono',monospace;transform:scaleX(0.8640);"><span>    <span style="color:#0000FF">&lt;body&gt;</span></span></div><div class="t" id="t43" style="left:295.5px;top:187.57px;font-size:13.5px;line-height:13.5px;color:#000;font-weight:400;font-family:'Liberation Mono',monospace;transform:scaleX(0.8640);"><span>        <span style="color:#0000FF">&lt;center&gt;</span>Welcome<span style="color:#0000FF">&lt;/center&gt;</span></span></div><div class="t" id="t44" style="left:295.5px;top:200.57px;font-size:13.5px;line-height:13.5px;color:#000;font-weight:400;font-family:'Liberation Mono',monospace;transform:scaleX(0.8640);"><span>    <span style="color:#0000FF">&lt;/body&gt;</span></span></div><div class="t" id="t45" style="left:295.5px;top:213.57px;font-size:13.5px;line-height:13.5px;color:#000;font-weight:400;font-family:'Liberation Mono',monospace;transform:scaleX(0.8639);"><span><span style="color:#0000FF">&lt;/html&gt;</span></span></div><div style="left:624px;top:96px;width:16px;height:278px;background:;background:repeating-conic-gradient(#FFFFFF 0 25%,#D4D0C8 0 50%) 0 0/2px 2px"></div><div style="left:624px;top:96px;width:16px;height:16px;background:#D4D0C8;box-shadow:inset -1px -1px #404040,inset 1px 1px #D4D0C8,inset -2px -2px #808080,inset 2px 2px #FFFFFF;"></div><svg style="position:absolute;left:624px;top:96px;" width="16" height="16" viewBox="0 0 16 16" shape-rendering="crispEdges"><path d="M4 10h7l-3.5-4z" fill="#808080"/><path d="M5 11h7" stroke="#fff"/></svg><div style="left:624px;top:358px;width:16px;height:16px;background:#D4D0C8;box-shadow:inset -1px -1px #404040,inset 1px 1px #D4D0C8,inset -2px -2px #808080,inset 2px 2px #FFFFFF;"></div><svg style="position:absolute;left:624px;top:358px;" width="16" height="16" viewBox="0 0 16 16" shape-rendering="crispEdges"><path d="M4 6h7l-3.5 4z" fill="#808080"/></svg><div style="left:295px;top:374px;width:16px;height:16px;background:#D4D0C8;box-shadow:inset -1px -1px #404040,inset 1px 1px #D4D0C8,inset -2px -2px #808080,inset 2px 2px #FFFFFF;"></div><svg style="position:absolute;left:295px;top:374px;shape-rendering:auto" width="16" height="16" viewBox="0 0 16 16" shape-rendering="crispEdges"><path d="M6 8l4-4v8z" fill="#000"/></svg><div style="left:311px;top:374px;width:218px;height:16px;background:#D4D0C8;box-shadow:inset -1px -1px #404040,inset 1px 1px #D4D0C8,inset -2px -2px #808080,inset 2px 2px #FFFFFF;"></div><div style="left:529px;top:374px;width:79px;height:16px;background:;background:repeating-conic-gradient(#FFFFFF 0 25%,#D4D0C8 0 50%) 0 0/2px 2px"></div><div style="left:608px;top:374px;width:16px;height:16px;background:#D4D0C8;box-shadow:inset -1px -1px #404040,inset 1px 1px #D4D0C8,inset -2px -2px #808080,inset 2px 2px #FFFFFF;"></div><svg style="position:absolute;left:608px;top:374px;shape-rendering:auto" width="16" height="16" viewBox="0 0 16 16" shape-rendering="crispEdges"><path d="M6 4l4 4-4 4z" fill="#000"/></svg><div style="left:281px;top:390px;width:373px;height:1px;background:#808080;"></div><div style="left:281px;top:391px;width:30px;height:18px;background:#D4D0C8;"></div><div style="left:281px;top:391px;width:30px;height:1px;background:#FFFFFF;"></div><div style="left:281px;top:391px;width:1px;height:18px;background:#FFFFFF;"></div><div style="left:281px;top:408px;width:30px;height:1px;background:#FFFFFF;"></div><div style="left:310px;top:391px;width:1px;height:18px;background:#808080;"></div><div class="t" id="t46" style="left:286px;top:393.84px;font-size:12px;line-height:12px;color:#000;font-weight:400;font-family:'Liberation Sans',sans-serif;-webkit-text-stroke:0.25px #000;transform:scaleX(0.9084);"><span>JSP</span></div><div class="t" id="t47" style="left:313px;top:393.84px;font-size:12px;line-height:12px;color:#000;font-weight:400;font-family:'Liberation Sans',sans-serif;-webkit-text-stroke:0.25px #000;transform:scaleX(1.0171);"><span>Servlet</span></div><div style="left:354px;top:400px;width:1px;height:9px;background:#808080;"></div><div class="t" id="t48" style="left:358px;top:393.84px;font-size:12px;line-height:12px;color:#000;font-weight:400;font-family:'Liberation Sans',sans-serif;-webkit-text-stroke:0.25px #000;transform:scaleX(0.9517);"><span>Refresh</span></div><div style="left:280px;top:415px;width:375px;height:171px;background:#D4D0C8;"></div><div style="left:280px;top:415px;width:375px;height:1px;background:#808080;"></div><div style="left:280px;top:585px;width:375px;height:1px;background:#808080;"></div><div style="left:280px;top:415px;width:1px;height:171px;background:#808080;"></div><div style="left:654px;top:415px;width:1px;height:171px;background:#808080;"></div><div style="left:281px;top:416px;width:373px;height:1px;background:#FFFFFF;"></div><div style="left:281px;top:416px;width:1px;height:169px;background:#FFFFFF;"></div><div style="left:655px;top:416px;width:1px;height:171px;background:#A8A6A0;"></div><div style="left:281px;top:586px;width:375px;height:1px;background:#A8A6A0;"></div><div style="left:281px;top:439px;width:373px;height:1px;background:#808080;"></div><div style="left:281px;top:440px;width:373px;height:126px;background:#fff;"></div><svg style="position:absolute;left:286px;top:420px;shape-rendering:auto" width="15" height="15" viewBox="0 0 15 15" shape-rendering="crispEdges"><rect x="0" y="0" width="15" height="15" fill="#F4F4EC"/><rect x="1.5" y="1.5" width="11" height="9" fill="#101010" stroke="#707070"/><path d="M4 4.5h5" stroke="#F0D020" stroke-width="1.4"/><path d="M4 7h7" stroke="#E02020" stroke-width="1.6"/><path d="M7 11v2M3 13.5h8" stroke="#505050"/></svg><div class="t" id="t49" style="left:305px;top:421.84px;font-size:12px;line-height:12px;color:#000;font-weight:400;font-family:'Liberation Sans',sans-serif;-webkit-text-stroke:0.25px #000;transform:scaleX(0.7667);"><span>コンソール</span></div><svg style="position:absolute;left:526px;top:423px;" width="11" height="11" viewBox="0 0 11 11" shape-rendering="crispEdges"><rect x="0.5" y="0.5" width="10" height="10" fill="none" stroke="#B0B0B0"/></svg><div style="left:546px;top:418px;width:1px;height:20px;background:#808080;"></div><div style="left:547px;top:418px;width:1px;height:20px;background:#FFFFFF;"></div><svg style="position:absolute;left:554px;top:419px;shape-rendering:auto" width="18" height="17" viewBox="0 0 18 17" shape-rendering="crispEdges"><rect x="0.5" y="0.5" width="7" height="15" fill="#fff" stroke="#404040"/><path d="M1 5h6M1 10h6" stroke="#404040"/><circle cx="12" cy="3" r="2" fill="#000"/><path d="M11 5 L9 10 L6 14 M9 10 L13 12 L13 16 M10 6 L14 8 L17 7" stroke="#000" stroke-width="1.8" fill="none"/></svg><svg style="position:absolute;left:577px;top:426px;shape-rendering:auto" width="5" height="3" viewBox="0 0 5 3" shape-rendering="crispEdges"><path d="M0 0H5L2.5 3Z" fill="#000"/></svg><svg style="position:absolute;left:590px;top:421px;shape-rendering:auto" width="12" height="14" viewBox="0 0 12 14" shape-rendering="crispEdges"><path d="M3 6v-2.5a3 3 0 0 1 6 0v2.5" stroke="#A0A0A0" stroke-width="1.5" fill="none"/><rect x="1.5" y="6.5" width="9" height="7" fill="#D8D8D8" stroke="#A0A0A0"/><path d="M2 9h8M2 11h8" stroke="#B0B0B0"/></svg><svg style="position:absolute;left:610px;top:420px;shape-rendering:auto" width="18" height="16" viewBox="0 0 18 16" shape-rendering="crispEdges"><path d="M1 12 L9 2 L14 5 L6 15Z" fill="#E8E8E8" stroke="#A0A0A0"/><path d="M1 12 L4 8 L9 11 L6 15Z" fill="#C8C8C8"/><path d="M11 15h6" stroke="#A0A0A0"/></svg><svg style="position:absolute;left:638px;top:424px;shape-rendering:auto" width="9" height="9" viewBox="0 0 9 9" shape-rendering="crispEdges"><path d="M0.8 1L7.8 8M7.8 1L0.8 8" stroke="#000" stroke-width="1.5"/></svg><div style="left:638px;top:440px;width:16px;height:110px;background:;background:repeating-conic-gradient(#FFFFFF 0 25%,#D4D0C8 0 50%) 0 0/2px 2px"></div><div style="left:638px;top:440px;width:16px;height:16px;background:#D4D0C8;box-shadow:inset -1px -1px #404040,inset 1px 1px #D4D0C8,inset -2px -2px #808080,inset 2px 2px #FFFFFF;"></div><svg style="position:absolute;left:638px;top:440px;" width="16" height="16" viewBox="0 0 16 16" shape-rendering="crispEdges"><path d="M4 10h7l-3.5-4z" fill="#808080"/><path d="M5 11h7" stroke="#fff"/></svg><div style="left:638px;top:534px;width:16px;height:16px;background:#D4D0C8;box-shadow:inset -1px -1px #404040,inset 1px 1px #D4D0C8,inset -2px -2px #808080,inset 2px 2px #FFFFFF;"></div><svg style="position:absolute;left:638px;top:534px;" width="16" height="16" viewBox="0 0 16 16" shape-rendering="crispEdges"><path d="M4 6h7l-3.5 4z" fill="#808080"/><path d="M5 11h7" stroke="#fff"/></svg><div style="left:281px;top:550px;width:357px;height:16px;background:;background:repeating-conic-gradient(#FFFFFF 0 25%,#D4D0C8 0 50%) 0 0/2px 2px"></div><div style="left:281px;top:550px;width:16px;height:16px;background:#D4D0C8;box-shadow:inset -1px -1px #404040,inset 1px 1px #D4D0C8,inset -2px -2px #808080,inset 2px 2px #FFFFFF;"></div><svg style="position:absolute;left:281px;top:550px;shape-rendering:auto" width="16" height="16" viewBox="0 0 16 16" shape-rendering="crispEdges"><path d="M6 8l4-4v8z" fill="#808080"/></svg><div style="left:622px;top:550px;width:16px;height:16px;background:#D4D0C8;box-shadow:inset -1px -1px #404040,inset 1px 1px #D4D0C8,inset -2px -2px #808080,inset 2px 2px #FFFFFF;"></div><svg style="position:absolute;left:622px;top:550px;shape-rendering:auto" width="16" height="16" viewBox="0 0 16 16" shape-rendering="crispEdges"><path d="M6 4l4 4-4 4z" fill="#808080"/></svg><div style="left:638px;top:550px;width:16px;height:16px;background:#D4D0C8;"></div><div style="left:281px;top:566px;width:1px;height:19px;background:#D4D0C8;"></div><div class="t" id="t50" style="left:284px;top:570.14px;font-size:12px;line-height:12px;color:#000;font-weight:400;font-family:'Liberation Sans',sans-serif;-webkit-text-stroke:0.25px #000;transform:scaleX(0.7222);"><span>タスク</span></div><div style="left:314px;top:567px;width:55px;height:18px;background:#D4D0C8;"></div><div style="left:314px;top:567px;width:55px;height:1px;background:#FFFFFF;"></div><div style="left:314px;top:567px;width:1px;height:18px;background:#FFFFFF;"></div><div style="left:314px;top:584px;width:55px;height:1px;background:#FFFFFF;"></div><div style="left:368px;top:567px;width:1px;height:18px;background:#808080;"></div><div class="t" id="t51" style="left:317.5px;top:570.14px;font-size:12px;line-height:12px;color:#000;font-weight:400;font-family:'Liberation Sans',sans-serif;-webkit-text-stroke:0.25px #000;transform:scaleX(0.7667);"><span>コンソール</span></div></body></html>
